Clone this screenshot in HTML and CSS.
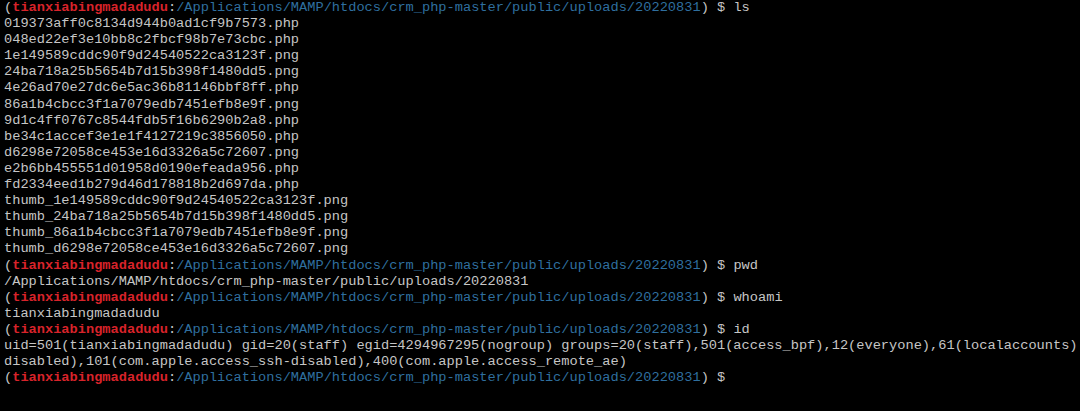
FILE: index.html
```html
<!DOCTYPE html>
<html>
<head>
<meta charset="utf-8">
<link rel="stylesheet" href="styles.css">
</head>
<body>
<div class="term"><div class="line">(<span class="u">tianxiabingmadadudu</span>:<span class="p">/Applications/MAMP/htdocs/crm_php-master/public/uploads/20220831</span>) $ ls</div><div class="line">019373aff0c8134d944b0ad1cf9b7573.php</div><div class="line">048ed22ef3e10bb8c2fbcf98b7e73cbc.php</div><div class="line">1e149589cddc90f9d24540522ca3123f.png</div><div class="line">24ba718a25b5654b7d15b398f1480dd5.png</div><div class="line">4e26ad70e27dc6e5ac36b81146bbf8ff.php</div><div class="line">86a1b4cbcc3f1a7079edb7451efb8e9f.png</div><div class="line">9d1c4ff0767c8544fdb5f16b6290b2a8.php</div><div class="line">be34c1accef3e1e1f4127219c3856050.php</div><div class="line">d6298e72058ce453e16d3326a5c72607.png</div><div class="line">e2b6bb455551d01958d0190efeada956.php</div><div class="line">fd2334eed1b279d46d178818b2d697da.php</div><div class="line">thumb_1e149589cddc90f9d24540522ca3123f.png</div><div class="line">thumb_24ba718a25b5654b7d15b398f1480dd5.png</div><div class="line">thumb_86a1b4cbcc3f1a7079edb7451efb8e9f.png</div><div class="line">thumb_d6298e72058ce453e16d3326a5c72607.png</div><div class="line">(<span class="u">tianxiabingmadadudu</span>:<span class="p">/Applications/MAMP/htdocs/crm_php-master/public/uploads/20220831</span>) $ pwd</div><div class="line">/Applications/MAMP/htdocs/crm_php-master/public/uploads/20220831</div><div class="line">(<span class="u">tianxiabingmadadudu</span>:<span class="p">/Applications/MAMP/htdocs/crm_php-master/public/uploads/20220831</span>) $ whoami</div><div class="line">tianxiabingmadadudu</div><div class="line">(<span class="u">tianxiabingmadadudu</span>:<span class="p">/Applications/MAMP/htdocs/crm_php-master/public/uploads/20220831</span>) $ id</div><div class="line">uid=501(tianxiabingmadadudu) gid=20(staff) egid=4294967295(nogroup) groups=20(staff),501(access_bpf),12(everyone),61(localaccounts)</div><div class="line">disabled),101(com.apple.access_ssh-disabled),400(com.apple.access_remote_ae)</div><div class="line">(<span class="u">tianxiabingmadadudu</span>:<span class="p">/Applications/MAMP/htdocs/crm_php-master/public/uploads/20220831</span>) $</div></div>
</body>
</html>
```
FILE: styles.css
```css
html, body {
  margin: 0;
  padding: 0;
  background: #000;
  width: 1080px;
  height: 411px;
  overflow: hidden;
}
.term {
  padding: 0 0 0 4px;
  font-family: "Liberation Mono", monospace;
  font-size: 13.67px;
  line-height: 16.1px;
  color: #c6c6c6;
}
.line {
  white-space: pre;
  height: 16.1px;
}
.u {
  color: #d8232a;
  font-weight: bold;
}
.p {
  color: #2f6f9f;
}
```
